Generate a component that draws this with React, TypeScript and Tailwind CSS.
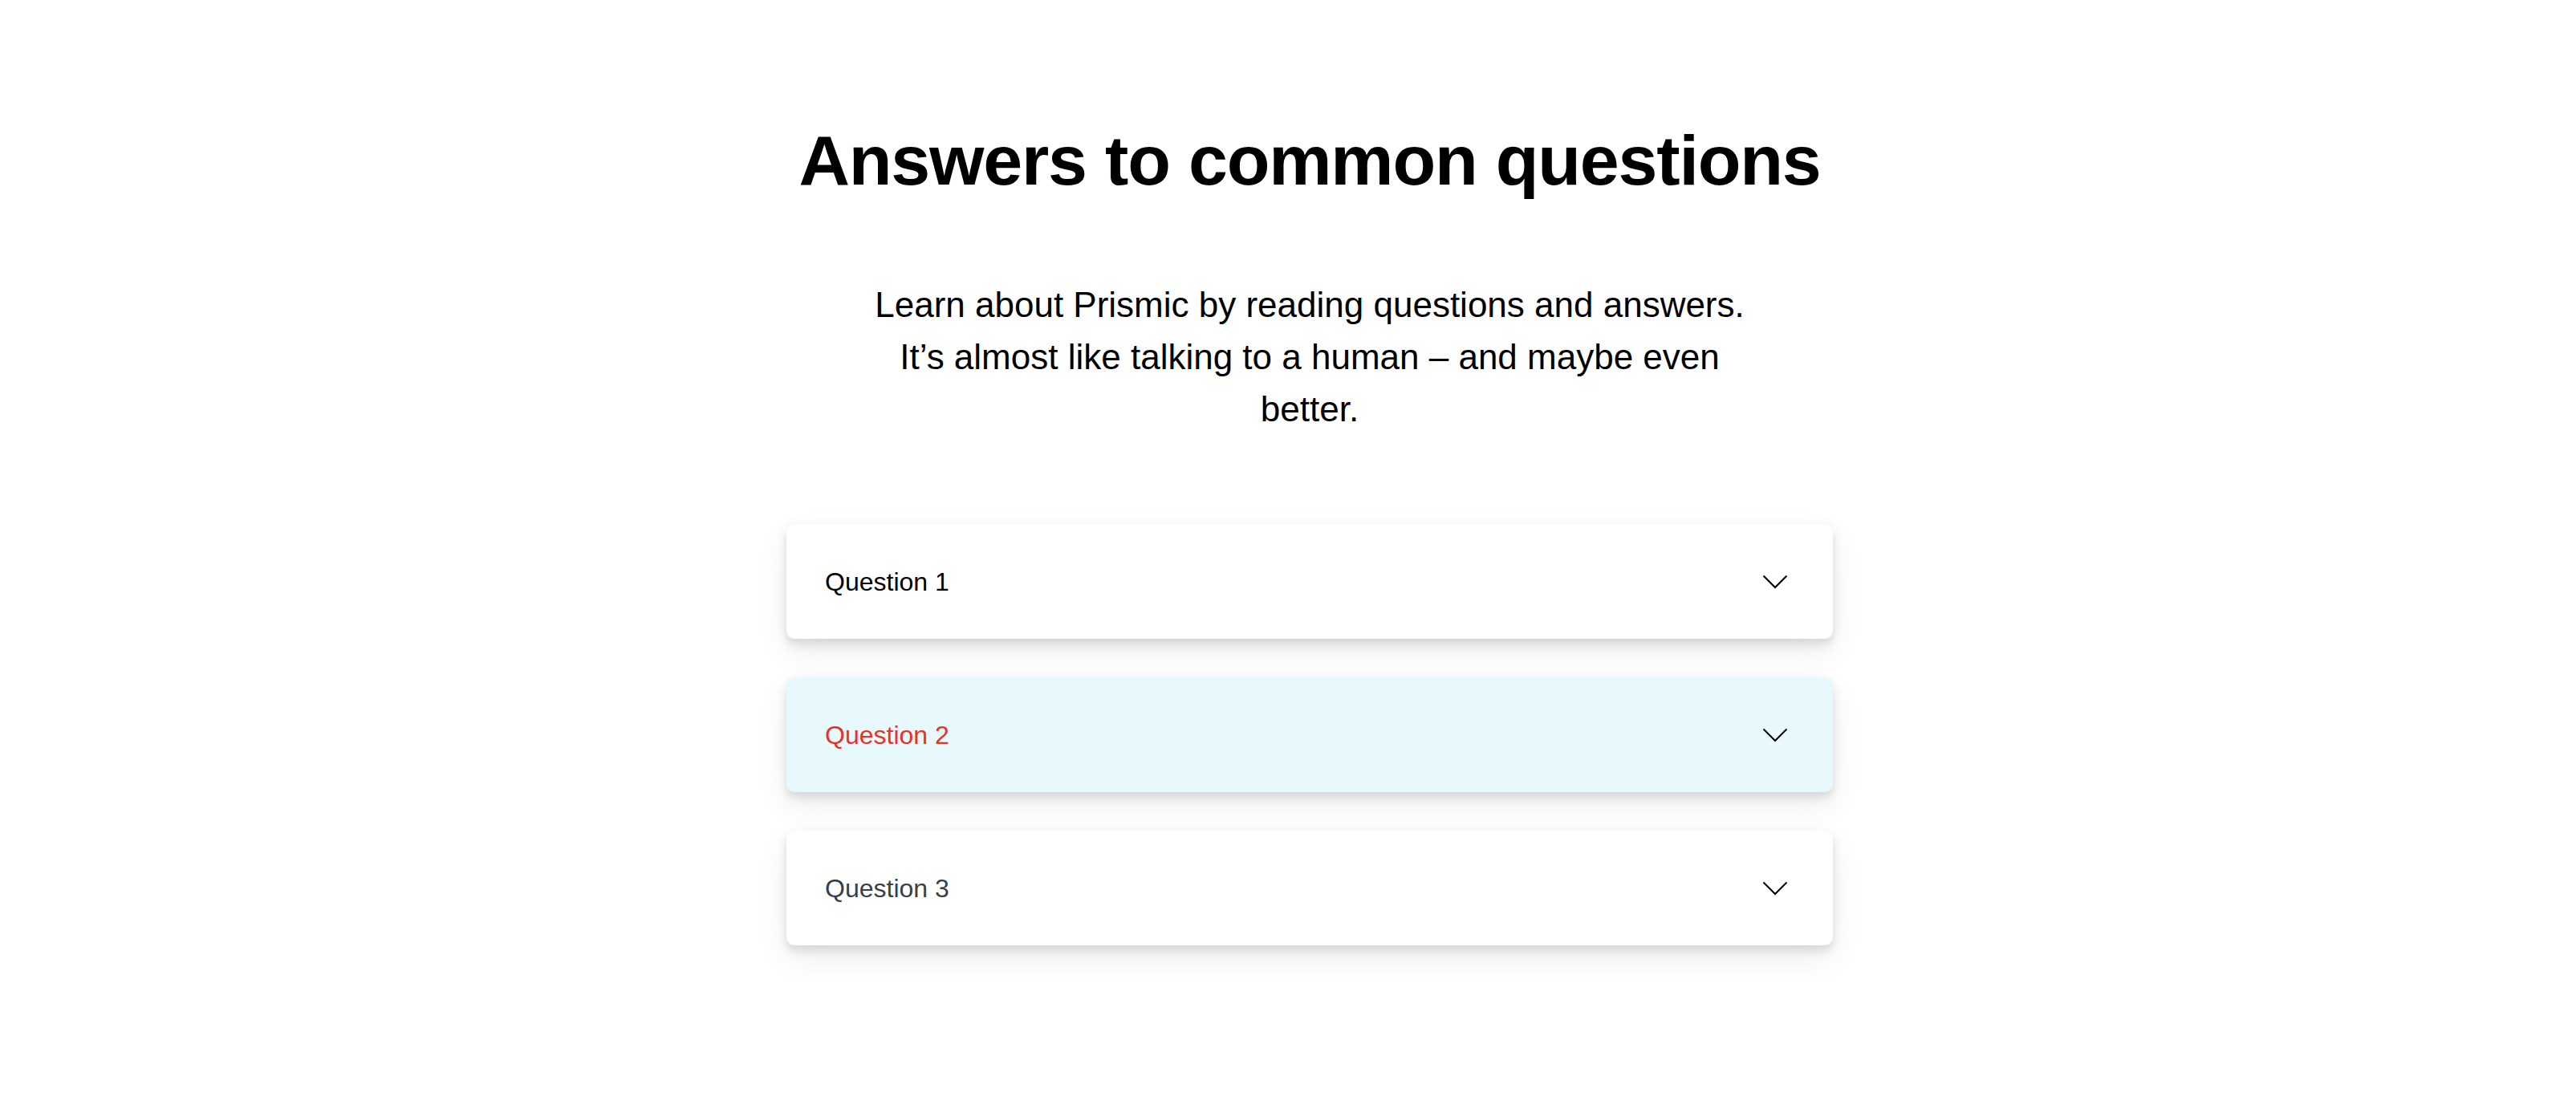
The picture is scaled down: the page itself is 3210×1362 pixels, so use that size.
import React from "react";

const font = { fontFamily: '"Liberation Sans", Arial, Helvetica, sans-serif' };

function Chevron() {
  return (
    <svg width="32" height="18" viewBox="0 0 32 18" fill="none" className="shrink-0">
      <path d="M1.5 1.5 L16 16 L30.5 1.5" stroke="#000" strokeWidth="2" strokeLinecap="butt" strokeLinejoin="miter" />
    </svg>
  );
}

function Item({ label, variant }: { label: string; variant: "default" | "active" | "muted" }) {
  const bg = variant === "active" ? "bg-[#e7f9fd]" : "bg-white";
  const color =
    variant === "active" ? "text-[#e63323]" : variant === "muted" ? "text-[#3a3f47]" : "text-black";
  return (
    <div
      className={`w-full h-[143px] rounded-[10px] ${bg} flex items-center justify-between pl-[48px] pr-[56px] shadow-[0_8px_12px_rgba(0,0,0,0.10),0_16px_40px_rgba(0,0,0,0.07),0_0_14px_rgba(0,0,0,0.03)]`}
    >
      <span className={`text-[32px] leading-none ${color}`}>{label}</span>
      <Chevron />
    </div>
  );
}

export default function App() {
  return (
    <div className="min-h-screen bg-white flex flex-col items-center pt-[156px] pl-[54px]" style={font}>
      <h1 className="text-[88px] leading-[88px] font-bold tracking-[-1.2px] text-black text-center">
        Answers to common questions
      </h1>
      <p className="mt-[103px] max-w-[1130px] text-center text-[44px] leading-[65px] text-black">
        Learn about Prismic by reading questions and answers. It’s almost like talking to a human – and maybe even better.
      </p>
      <div className="mt-[111px] w-[1304px] flex flex-col gap-[48px]">
        <Item label="Question 1" variant="default" />
        <Item label="Question 2" variant="active" />
        <Item label="Question 3" variant="muted" />
      </div>
    </div>
  );
}
